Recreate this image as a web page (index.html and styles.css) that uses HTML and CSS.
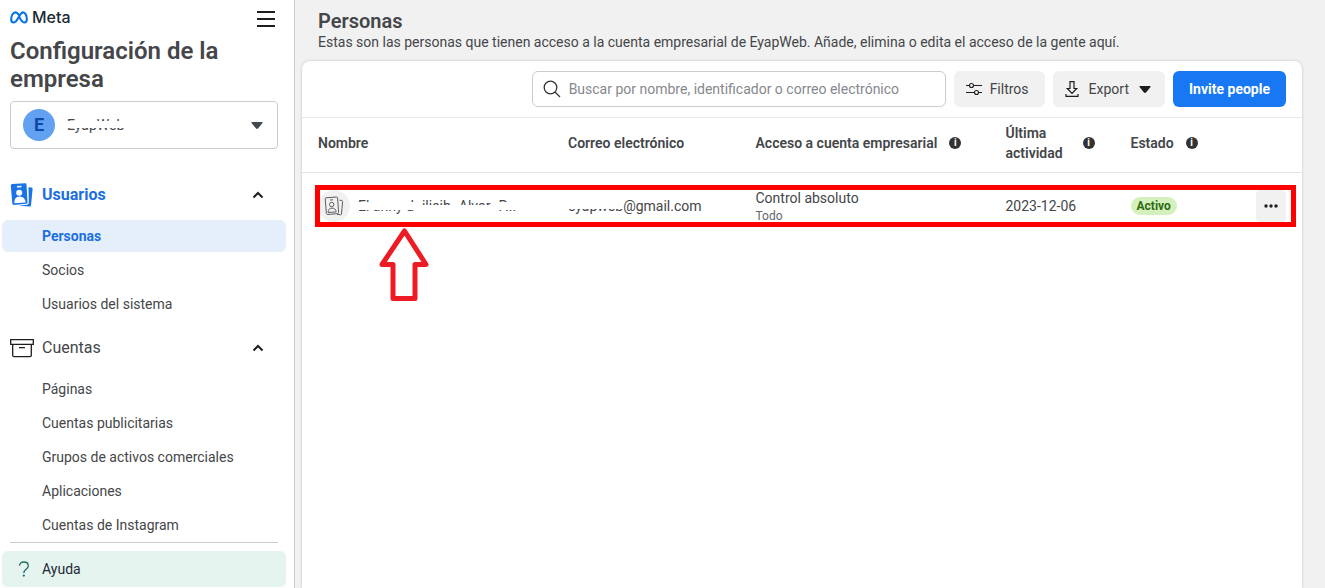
FILE: index.html
```html
<!DOCTYPE html>
<html lang="es">
<head>
    <meta charset="UTF-8">
    <meta name="viewport" content="width=device-width, initial-scale=1.0">
    <title>Configuración de la empresa</title>
    <link rel="stylesheet" href="styles.css">
</head>
<body>
    <aside class="sidebar">
        <div class="sidebar-top">
            <div class="brand">
                <svg class="brand-mark" viewBox="0 0 20 14" width="18" height="13" fill="none" stroke="#0a73e6" stroke-width="2.3">
                    <path d="M10 4.4C8.6 2.300 7.400 1.300 5.900 1.300 3.400 1.300 1.300 4.900 1.300 8.700c0 2.500 1 3.900 2.700 3.900 1.700 0 2.800-1.100 4.600-4.300L10 5.900C11.700 2.800 12.800 1.300 14.500 1.300c2.400 0 4.200 3.500 4.200 7.300 0 2.500-1 4-2.700 4-1.700 0-2.700-1.200-4.600-4.300L9.500 5"/>
                </svg>
                <span>Meta</span>
            </div>
            <button type="button" class="menu-btn" aria-label="Menú">
                <svg viewBox="0 0 18 16" width="18" height="16" stroke="#1c1e21" stroke-width="2">
                    <path d="M0 1h18M0 8h18M0 15h18"/>
                </svg>
            </button>
        </div>
        <h1>Configuración de la empresa</h1>

        <div class="business">
            <span class="business-avatar">E</span>
            <select class="business-select" aria-label="Cuenta empresarial">
                <option>EyapWeb</option>
            </select>
            <span class="business-strip"></span>
            <svg class="business-caret" viewBox="0 0 12 7" width="12" height="7" fill="#444950"><path d="M1 0h10q1 0 .5 1L7 6.500q-1 .8-2 0L.5 1Q0 0 1 0z"/></svg>
        </div>

        <nav>
            <button type="button" class="group active">
                <svg viewBox="0 0 24 24" width="24" height="24">
                    <path d="M2.200 1 15 .2q1.400 0 1.500 1.300l1 17.700q0 1.300-1.300 1.500L4 22q-1.500 0-1.700-1.400L.8 2.500Q.8 1.200 2.200 1z" fill="#1b74e4"/>
                    <path d="M18.500 4.200l3 .4q1.300.3 1.100 1.600L21 22.500q-.2 1.200-1.400 1.100L8.500 22.800l8.600-1q1.700-.4 1.700-2z" fill="#1b74e4"/>
                    <path d="M7 3.800l4.500-.3" stroke="#fff" stroke-width="1.400"/>
                    <circle cx="9.200" cy="9.700" r="3" fill="#fff"/>
                    <path d="M4.300 20.300C4.300 16 6 13.700 9.500 13.500c3.600-.1 5.700 1.900 6.200 6z" fill="#fff"/>
                </svg>
                <span>Usuarios</span>
                <svg class="chevron" viewBox="0 0 12 8" width="12" height="8"><path d="M1.500 6.500 6 2l4.500 4.500"/></svg>
            </button>
            <ul>
                <li><a href="#" class="current">Personas</a></li>
                <li><a href="#">Socios</a></li>
                <li><a href="#">Usuarios del sistema</a></li>
            </ul>

            <button type="button" class="group">
                <svg viewBox="0 0 24 24" width="24" height="24" fill="none" stroke="#1c1e21" stroke-width="1.300">
                    <path d="M.7 3.700h22.600v4.600H.7zM2.700 8.300v11q0 1.400 1.300 1.400h16q1.300 0 1.300-1.400v-11M9 11.700h6"/>
                </svg>
                <span>Cuentas</span>
                <svg class="chevron" viewBox="0 0 12 8" width="12" height="8"><path d="M1.500 6.500 6 2l4.500 4.500"/></svg>
            </button>
            <ul>
                <li><a href="#">Páginas</a></li>
                <li><a href="#">Cuentas publicitarias</a></li>
                <li><a href="#">Grupos de activos comerciales</a></li>
                <li><a href="#">Aplicaciones</a></li>
                <li><a href="#">Cuentas de Instagram</a></li>
            </ul>
        </nav>

        <hr>
        <a href="#" class="help">
            <svg viewBox="0 0 12 16" width="12" height="16" fill="none" stroke="#1f6f66" stroke-width="1.300">
                <path d="M1.500 4.800C1.500 2.300 3.500 1 5.800 1c2.500 0 4.500 1.400 4.500 3.700 0 3.600-4.500 3.500-4.500 7.300"/>
                <circle cx="5.800" cy="14.600" r=".5"/>
            </svg>
            Ayuda
        </a>
    </aside>

    <main>
        <header class="page-head">
            <h2>Personas</h2>
            <p>Estas son las personas que tienen acceso a la cuenta empresarial de EyapWeb. Añade, elimina o edita el acceso de la gente aquí.</p>
        </header>

        <section class="card">
            <div class="toolbar">
                <label class="search">
                    <svg viewBox="0 0 18 18" width="18" height="18" fill="none" stroke="#333" stroke-width="1.300">
                        <circle cx="7.500" cy="7.500" r="6.300"/><path d="M12 12l5 5"/>
                    </svg>
                    <input type="search" aria-label="Buscar" placeholder="Buscar por nombre, identificador o correo electrónico">
                </label>
                <button type="button" class="btn">
                    <svg viewBox="0 0 16 14" width="16" height="14" fill="none" stroke="#1c1e21" stroke-width="1.100">
                        <path d="M0 3.500h3.500M7.500 3.500H16M0 10.500h8.500M12.500 10.500H16"/>
                        <circle cx="5.500" cy="3.500" r="2"/><circle cx="10.500" cy="10.500" r="2"/>
                    </svg>
                    Filtros
                </button>
                <button type="button" class="btn export">
                    <svg viewBox="0 0 14 16" width="14" height="16" fill="none" stroke="#1c1e21" stroke-width="1.200">
                        <path d="M5 .6h4v6.900h2.700L7 12.300 2.300 7.500H5zM1 13v2.300h12V13"/>
                    </svg>
                    Export
                    <svg viewBox="0 0 12 7" width="12" height="7" fill="#1c1e21"><path d="M1 0h10q1 0 .5 1L7 6.500q-1 .8-2 0L.5 1Q0 0 1 0z"/></svg>
                </button>
                <button type="button" class="btn primary">Invite people</button>
            </div>

            <div class="table-wrap">
                <table>
                    <thead>
                        <tr>
                            <th class="col-name">Nombre</th>
                            <th class="col-mail">Correo electrónico</th>
                            <th class="col-access"><div class="th-info"><span>Acceso a cuenta empresarial</span><i class="info">i</i></div></th>
                            <th class="col-last"><div class="th-info wide"><span>Última actividad</span><i class="info">i</i></div></th>
                            <th><div class="th-info"><span>Estado</span><i class="info">i</i></div></th>
                        </tr>
                    </thead>
                    <tbody>
                        <tr>
                            <td>
                                <div class="person">
                                    <span class="person-icon">
                                        <svg viewBox="0 0 20 20" width="20" height="20" fill="none" stroke="#5a5e64" stroke-width="1">
                                            <path d="M2 1.800 12.500 1q1 0 1.100 1l1 14.500q0 1-1 1.100L3.500 18.500q-1 0-1.100-1L1.200 2.800q0-1 .8-1z"/>
                                            <path d="M15.500 4.200l2.300.3q.9.200.8 1.100L17.500 18q-.2.900-1 .8l-3.500-.5M6 4l3-.2"/>
                                            <circle cx="7.700" cy="8.500" r="2.200"/>
                                            <path d="M4 16.500c.2-3 1.500-4.300 4-4.400 2.400 0 3.800 1.200 4.200 3.800z"/>
                                        </svg>
                                    </span>
                                    <span class="masked middle">El anny d</span>
                                    <span class="masked lower">ilieib</span>
                                    <span class="masked lower">Alvar</span>
                                    <span class="masked middle">P...</span>
                                </div>
                            </td>
                            <td><span class="masked upper">eyapweb</span>@gmail.com</td>
                            <td>Control absoluto<small>Todo</small></td>
                            <td>2023-12-06</td>
                            <td>
                                <div class="state">
                                    <span class="badge">Activo</span>
                                    <button type="button" class="more" aria-label="Más opciones">
                                        <svg viewBox="0 0 14 4" width="14" height="4" fill="#1c1e21"><circle cx="2" cy="2" r="1.700"/><circle cx="7" cy="2" r="1.700"/><circle cx="12" cy="2" r="1.700"/></svg>
                                    </button>
                                </div>
                            </td>
                        </tr>
                    </tbody>
                </table>
                <div class="highlight"></div>
                <svg class="arrow" viewBox="0 0 52 76" width="52" height="76" fill="none" stroke="#ed1c24" stroke-width="5" stroke-linejoin="round">
                    <path d="M26.500 4 48 37.500H37v34H15v-34H4z"/>
                </svg>
            </div>
        </section>
    </main>
</body>
</html>
```
FILE: styles.css
```css
* {
    box-sizing: border-box;
}
body {
    display: flex;
    min-height: 100vh;
    margin: 0;
    font-family: Roboto, Arial, sans-serif;
    font-size: 14px;
    line-height: 20px;
    color: #444649;
    background-color: #f1f1f1;
}
h1, h2, p, ul {
    margin: 0;
    padding: 0;
}
button, input, select {
    font: inherit;
    color: inherit;
}
button {
    border: none;
    cursor: pointer;
}
svg {
    flex: none;
}

/* Sidebar */
.sidebar {
    flex: 0 0 295px;
    padding: 6px 8px 0 2px;
    background-color: white;
    border-right: 1px solid #ccc;
}
.sidebar-top {
    display: flex;
    justify-content: space-between;
    padding: 0 11px 0 8px;
    height: 25px;
}
.brand {
    display: flex;
    align-items: center;
    gap: 4px;
    height: 22px;
    font-family: Inter, sans-serif;
    font-size: 16px;
    font-weight: 500;
    color: #1c2b33;
}
.menu-btn {
    display: flex;
    align-items: center;
    padding: 0;
    background: none;
}
h1 {
    margin: 6px 8px 8px;
    font-size: 24px;
    font-weight: 600;
    line-height: 28px;
}
.business {
    position: relative;
    display: flex;
    align-items: center;
    height: 48px;
    margin: 0 8px 21px;
    border: 1px solid #ccc;
    border-radius: 4px;
}
.business-avatar {
    flex: none;
    width: 32px;
    margin-left: 12px;
    border-radius: 50%;
    background-color: #62a1f2;
    color: #0b4aa2;
    font-size: 18px;
    font-weight: 700;
    line-height: 32px;
    text-align: center;
}
.business-select {
    flex: 1;
    height: 100%;
    padding: 0 12px;
    border: none;
    background: none;
    appearance: none;
}
.business-strip {
    position: absolute;
    left: 52px;
    top: 19px;
    width: 72px;
    height: 7px;
    background-color: white;
}
.business-caret {
    position: absolute;
    right: 14px;
}
.group {
    display: flex;
    align-items: center;
    gap: 8px;
    width: 100%;
    height: 50px;
    padding: 0 22px 0 8px;
    background: none;
    font-size: 16px;
}
.group.active {
    color: #1b6fe0;
    font-weight: 700;
}
.chevron {
    margin-left: auto;
    fill: none;
    stroke: #1c1e21;
    stroke-width: 2;
}
nav ul {
    display: flex;
    flex-direction: column;
    gap: 2px;
    list-style-type: none;
}
nav ul + .group {
    margin-top: 3px;
}
nav li a {
    display: block;
    padding: 6px 0 6px 40px;
    border-radius: 6px;
    color: inherit;
    text-decoration: none;
}
nav li a.current {
    background-color: #e5effc;
    color: #1b6fe0;
    font-weight: 700;
}
hr {
    margin: 1px 8px 8px;
    border: none;
    border-top: 1px solid #ccc;
}
.help {
    display: flex;
    align-items: center;
    gap: 12px;
    height: 36px;
    padding-left: 16px;
    border-radius: 6px;
    background-color: #e5f4ef;
    color: #1c2b33;
    text-decoration: none;
}

/* Main column */
main {
    flex: 1;
    display: flex;
    flex-direction: column;
    padding: 10px 23px 0 7px;
}
.page-head {
    padding: 0 16px 9px;
}
h2 {
    font-size: 20px;
    font-weight: 600;
    line-height: 22px;
}
.card {
    flex: 1;
    background-color: white;
    border-radius: 8px 8px 0 0;
    box-shadow: 0 0 3px rgba(0, 0, 0, 0.2);
}
.toolbar {
    display: flex;
    justify-content: flex-end;
    gap: 8px;
    padding: 10px 16px;
    border-bottom: 1px solid #eaeaea;
}
.search {
    display: flex;
    align-items: center;
    gap: 8px;
    flex: 0 1 414px;
    height: 36px;
    padding: 0 10px;
    border: 1px solid #ccc;
    border-radius: 6px;
}
.search input {
    flex: 1;
    padding: 0;
    border: none;
    outline: none;
    background: none;
}
.search input::placeholder {
    color: #85888d;
}
.btn {
    display: flex;
    align-items: center;
    gap: 8px;
    height: 36px;
    padding: 0 16px 0 12px;
    border-radius: 6px;
    background-color: #f1f1f1;
}
.btn.export {
    gap: 10px;
    padding: 0 14px 0 12px;
}
.btn.primary {
    padding: 0 16px;
    background-color: #1877f2;
    color: white;
    font-weight: 700;
}

/* People table */
.table-wrap {
    position: relative;
}
table {
    width: 100%;
    border-collapse: collapse;
    table-layout: fixed;
}
th {
    height: 54px;
    padding: 0 0 4px 16px;
    border-bottom: 1px solid #e4e4e4;
    font-weight: 600;
    text-align: left;
}
td {
    height: 68px;
    padding: 0 0 0 16px;
}
.col-name, .col-access {
    width: 25%;
}
.col-mail {
    width: 18.75%;
}
.col-last {
    width: 12.5%;
}
.th-info {
    display: flex;
    align-items: center;
    gap: 12px;
}
.th-info.wide {
    justify-content: space-between;
    padding-right: 20px;
}
.info {
    flex: none;
    width: 12px;
    border-radius: 50%;
    background-color: #333;
    color: white;
    font-size: 10px;
    font-style: normal;
    font-weight: 700;
    line-height: 12px;
    text-align: center;
}
.person {
    display: flex;
    align-items: center;
    gap: 8px;
}
.person-icon {
    display: flex;
    align-items: center;
    justify-content: center;
    width: 32px;
    height: 32px;
    border-radius: 50%;
    background-color: #f1f1f1;
}

/* White strips that hide private text */
.masked {
    position: relative;
    display: inline-block;
}
.masked::after {
    content: "";
    position: absolute;
    left: 0;
    right: 0;
    height: 8px;
    background-color: white;
}
.masked.upper::after {
    top: 3px;
    height: 10px;
}
.masked.middle::after {
    top: 6px;
}
.masked.lower::after {
    top: 9px;
}
small {
    display: block;
    font-size: 12px;
    line-height: 16px;
    color: #65676b;
}
.state {
    display: flex;
    align-items: center;
    justify-content: space-between;
    padding-right: 16px;
}
.badge {
    padding: 0 6px;
    border-radius: 9px;
    background-color: #d4f0bd;
    color: #2f6b12;
    font-size: 12px;
    font-weight: 700;
    line-height: 18px;
}
.more {
    display: flex;
    align-items: center;
    justify-content: center;
    width: 30px;
    height: 32px;
    padding: 0;
    border-radius: 4px;
    background-color: #f1f1f1;
}
.highlight {
    position: absolute;
    top: 67px;
    left: 13px;
    right: 6px;
    height: 42px;
    border: 5px solid #ff0000;
}
.arrow {
    position: absolute;
    top: 109px;
    left: 76px;
}
```
